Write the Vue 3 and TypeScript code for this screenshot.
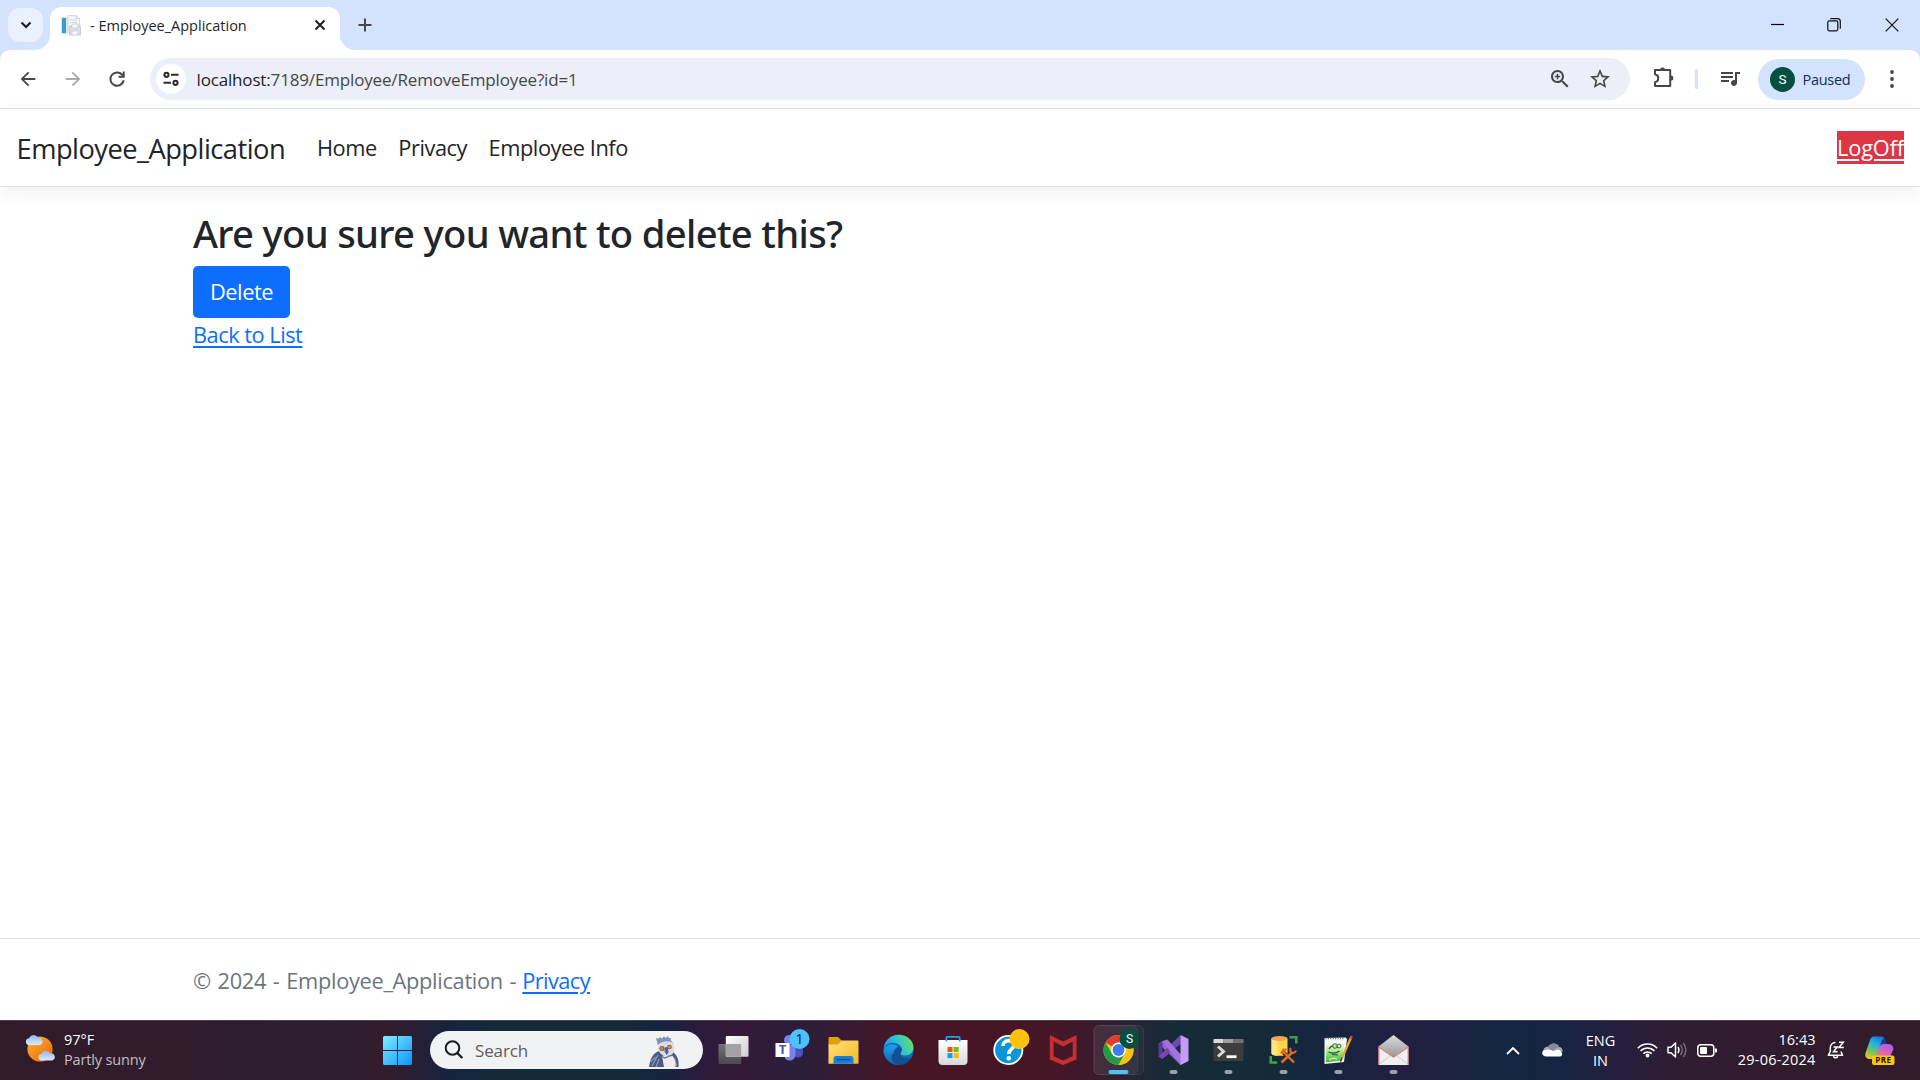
<script setup lang="ts">
interface NavLink {
  label: string
  cls: string
}

const navLinks: NavLink[] = [
  { label: 'Home', cls: 'home' },
  { label: 'Privacy', cls: 'privacy' },
  { label: 'Employee Info', cls: 'info' },
]
</script>

<template>
  <div class="screen">
    <header class="tabstrip">
      <button class="tab-search" aria-label="Search tabs">
        <svg width="12" height="8" viewBox="0 0 12 8"><path d="M1.5 1.5 6 6l4.5-4.5" fill="none" stroke="#1f1f1f" stroke-width="2.2" /></svg>
      </button>
      <div class="tab">
        <svg class="flare left" width="15" height="15" viewBox="0 0 15 15"><path d="M15 0v15H0A15 15 0 0 0 15 0z" fill="#fff" /></svg>
        <svg class="favicon" width="20" height="21" viewBox="0 0 20 21">
          <rect x="0" y="2" width="7" height="17" fill="#e3e6e8" />
          <rect x="1" y="3" width="4" height="15" fill="#3f9bcb" />
          <path d="M7 .5h8l3.500 3v14H7z" fill="#f3f4f6" stroke="#d3d5da" stroke-width=".8" />
          <path d="M15 .5v3h3.500" fill="none" stroke="#c7cad0" stroke-width=".8" />
          <path d="M9 5h7M9 7.500h7" stroke="#d4d8df" />
          <path d="M8.500 11h11v9h-11z" fill="#dcdfe5" stroke="#bcc0c7" stroke-width=".7" />
          <path d="M11 9h6v4h-6zM11 16h6v4h-6z" fill="#f6f7f9" stroke="#c4c8ce" stroke-width=".6" />
        </svg>
        <span class="tab-title">- Employee_Application</span>
        <svg class="tab-close" width="12" height="12" viewBox="0 0 12 12"><path d="M1.500 1.500l9 9M10.500 1.500l-9 9" stroke="#1f1f1f" stroke-width="2" /></svg>
        <svg class="flare right" width="15" height="15" viewBox="0 0 15 15"><path d="M0 0v15h15A15 15 0 0 1 0 0z" fill="#fff" /></svg>
      </div>
      <svg class="plus" width="14" height="14" viewBox="0 0 14 14"><path d="M7 .5v13M.5 7h13" stroke="#474747" stroke-width="2" /></svg>
      <div class="win-controls">
        <svg width="14" height="14" viewBox="0 0 14 14"><path d="M0 6.500h13" stroke="#000" stroke-width="1.200" /></svg>
        <svg width="14" height="14" viewBox="0 0 14 14"><rect x=".8" y="2.800" width="10" height="10" rx="1.500" fill="none" stroke="#111" stroke-width="1.200" /><path d="M3.300.700h7.200a2.800 2.800 0 0 1 2.800 2.800v7.200" fill="none" stroke="#111" stroke-width="1.200" /></svg>
        <svg width="14" height="14" viewBox="0 0 14 14"><path d="M.7.700l12.600 12.600M13.300.700.700 13.300" stroke="#111" stroke-width="1.200" /></svg>
      </div>
    </header>

    <div class="toolbar-wrap">
      <div class="toolbar">
        <svg class="back" width="22" height="22" viewBox="0 0 24 24"><path fill="#474747" d="M20 11H7.830l5.590-5.590L12 4l-8 8 8 8 1.410-1.410L7.830 13H20v-2z" /></svg>
        <svg class="forward" width="22" height="22" viewBox="0 0 24 24"><path fill="#a9a9a9" d="M12 4l-1.410 1.410L16.170 11H4v2h12.170l-5.580 5.590L12 20l8-8z" /></svg>
        <svg class="reload" width="18" height="18" viewBox="0 0 18 18"><path d="M15.700 10.300A6.700 6.700 0 1 1 14 4.500l1.700 1.700" fill="none" stroke="#474747" stroke-width="2" /><path d="M15.700 1.500v5.300h-5.200" fill="none" stroke="#474747" stroke-width="2" /></svg>
        <div class="omnibox">
          <span class="site-info">
            <svg width="16" height="16" viewBox="0 0 16 16"><g fill="none" stroke="#2b2b2b" stroke-width="2"><circle cx="3.500" cy="3.800" r="2.100" /><path d="M8 3.800h7.500M.5 11.800H8" /><circle cx="12.500" cy="11.800" r="2.100" /></g></svg>
          </span>
          <span class="url"><b>localhost:</b>7189/Employee/RemoveEmployee?id=1</span>
          <svg class="zoom" width="24" height="24" viewBox="0 0 24 24"><path fill="#474747" d="M15.500 14h-.79l-.28-.27C15.410 12.590 16 11.110 16 9.500 16 5.910 13.090 3 9.500 3S3 5.910 3 9.500 5.910 16 9.500 16c1.610 0 3.090-.59 4.230-1.570l.27.28v.79l5 4.990L20.490 19l-4.990-5zm-6 0C7.010 14 5 11.990 5 9.500S7.010 5 9.500 5 14 7.010 14 9.500 11.990 14 9.500 14z" /><path d="M9.500 6.800v5.400M6.800 9.500h5.400" stroke="#474747" stroke-width="1.600" /></svg>
          <svg class="star" width="24" height="24" viewBox="0 0 24 24"><path fill="#474747" d="M22 9.240l-7.190-.62L12 2 9.190 8.630 2 9.240l5.460 4.730L5.820 21 12 17.270 18.180 21l-1.630-7.030L22 9.240zM12 15.400l-3.760 2.270 1-4.280-3.320-2.880 4.380-.38L12 6.100l1.710 4.040 4.380.38-3.320 2.880 1 4.280L12 15.400z" /></svg>
        </div>
        <svg class="puzzle" width="22" height="22" viewBox="0 0 22 22">
          <path d="M3 3h14.200v15.900H2v-3.800c2.100-.5 3.300-2 3.300-3.900S4.100 7.800 2 7.300V3z" fill="none" stroke="#474747" stroke-width="2" stroke-linejoin="round" />
          <path d="M7 3a2.600 2.600 0 0 1 5.200 0zM17.800 8.500a2.600 2.600 0 0 1 0 5.200z" fill="#474747" />
        </svg>
        <span class="divider"></span>
        <svg class="media" width="24" height="24" viewBox="0 0 24 24"><path fill="#474747" d="M15 6H3v2h12V6zm0 4H3v2h12v-2zM3 16h8v-2H3v2zM17 6v8.180c-.31-.11-.65-.18-1-.18-1.660 0-3 1.340-3 3s1.340 3 3 3 3-1.340 3-3V8h3V6h-5z" /></svg>
        <div class="profile"><span class="avatar">S</span><span class="paused">Paused</span></div>
        <svg class="dots" width="4" height="18" viewBox="0 0 4 18"><g fill="#474747"><circle cx="2" cy="2" r="1.900" /><circle cx="2" cy="9" r="1.900" /><circle cx="2" cy="16" r="1.900" /></g></svg>
      </div>
    </div>

    <div class="page">
      <nav class="navbar">
        <a class="brand">Employee_Application</a>
        <a v-for="l in navLinks" :key="l.label" class="nav-link" :class="l.cls">{{ l.label }}</a>
        <a class="logoff">LogOff</a>
      </nav>
      <main class="main">
        <h3>Are you sure you want to delete this?</h3>
        <button class="btn">Delete</button>
        <div><a class="link back-link">Back to List</a></div>
      </main>
      <footer class="footer"><span class="copy">© 2024 - Employee_Application -</span><a class="link privacy">Privacy</a></footer>
    </div>

    <div class="taskbar">
      <div class="weather">
        <svg width="31" height="29" viewBox="0 0 31 29">
          <defs>
            <linearGradient id="sun" x1="0" y1="0" x2="1" y2="1"><stop offset="0" stop-color="#f6b52c" /><stop offset="1" stop-color="#ee6410" /></linearGradient>
            <linearGradient id="cloud" x1="0" y1="0" x2="0" y2="1"><stop offset="0" stop-color="#94b3ee" /><stop offset="1" stop-color="#dce9fb" /></linearGradient>
          </defs>
          <circle cx="15" cy="15" r="12.600" fill="url(#sun)" />
          <path d="M3.500 11A3.400 3.400 0 0 1 4 4.300 5 5 0 0 1 13 3.600a3.700 3.700 0 0 1 1.500 7.400z" fill="url(#cloud)" />
          <path d="M16 26.500a3.300 3.300 0 0 1 .3-6.500 5 5 0 0 1 9-.7 3.700 3.700 0 0 1 1.700 7.200z" fill="url(#cloud)" />
        </svg>
        <div class="weather-text"><span>97°F</span><span class="sub">Partly sunny</span></div>
      </div>

      <svg class="start" width="29" height="29" viewBox="0 0 29 29">
        <defs><linearGradient id="win" gradientUnits="userSpaceOnUse" x1="0" y1="0" x2="29" y2="29"><stop offset="0" stop-color="#7deeff" /><stop offset="1" stop-color="#0c95fb" /></linearGradient></defs>
        <path d="M1 0h13v14H0V1zM15 0h13l1 1v13H15zM0 15h14v14H1l-1-1zM15 15h14v13l-1 1H15z" fill="url(#win)" />
      </svg>

      <div class="search">
        <svg class="lens" width="20" height="20" viewBox="0 0 20 20"><circle cx="8.500" cy="8" r="6.800" fill="none" stroke="#1c1c1c" stroke-width="2" /><path d="M13.300 13l5 5" stroke="#1c1c1c" stroke-width="2.400" /></svg>
        <span class="search-label">Search</span>
        <svg class="eagle" width="30" height="32" viewBox="0 0 30 32">
          <path d="M0 31C1 23 4 17 10 15l14 1c5 4 6 9 5.500 15z" fill="#4b5a80" />
          <path d="M3 30l6-11M7 31l3-8M1.500 26l5-5M27.500 30l-2-8" stroke="#8b9bc0" stroke-width="1.200" />
          <path d="M13 20l10-1c3 4 4 8 3.500 12H15z" fill="#efe9ea" />
          <path d="M9 10 7 2l2.500.7L11 1l2 1.500L15 .3l1.500 1.700L19 0l1 2 2.500.3L21.500 4 24 7z" fill="#8290bb" />
          <path d="M9 9c3-4 12-5 15.500-1.500 1.500 5 1 9.500-3 12.500h-7c-4-3-6.500-6-5.500-11z" fill="#dcdbe6" />
          <path d="M12 20l4 2 4-2 4-1" stroke="#64668a" stroke-width="1.300" fill="none" />
          <circle cx="13" cy="12.500" r="2.500" fill="#7a5a55" /><circle cx="20.500" cy="11" r="2.300" fill="#7a5a55" />
          <circle cx="13" cy="12.500" r="1.400" fill="#ee8d25" /><circle cx="20.500" cy="11" r="1.400" fill="#ee8d25" />
          <path d="M15.500 11.500l3-.5 1.200 5-2 3-2-3z" fill="#45639c" />
        </svg>
      </div>

      <div class="apps">
        <svg viewBox="0 0 55 60">
          <defs>
            <linearGradient id="tv" x1="0" y1="0" x2="1" y2="1"><stop offset="0" stop-color="#fff" /><stop offset="1" stop-color="#d0cdd0" /></linearGradient>
            <linearGradient id="tv2" x1="0" y1="0" x2="0" y2="1"><stop offset="0" stop-color="#767377" /><stop offset="1" stop-color="#4b494c" /></linearGradient>
          </defs>
          <rect x="12.500" y="24" width="22.700" height="20" rx="1" fill="url(#tv2)" />
          <rect x="19.800" y="16" width="22.700" height="20.700" rx="1" fill="url(#tv)" />
          <path d="M19.800 24h15.400v12.700H19.800z" fill="#a3a1a4" />
        </svg>
        <svg viewBox="0 0 55 60">
          <circle cx="28" cy="20" r="5" fill="#7b83eb" />
          <path d="M33 27h9v5.500a5 5 0 0 1-9 3z" fill="#4a54c0" />
          <path d="M23 25h11.500v9.500a6 6 0 0 1-10.500 4z" fill="#7b83eb" />
          <rect x="14.500" y="23" width="14" height="14" fill="#fff" />
          <text x="21.500" y="34.300" class="t-tile">T</text>
          <circle cx="38.500" cy="19" r="10" fill="#4cc2ff" />
          <text x="38.500" y="24" class="t-badge">1</text>
        </svg>
        <svg viewBox="0 0 55 60">
          <defs><linearGradient id="fold" x1="0" y1="0" x2="1" y2="1"><stop offset="0" stop-color="#ffe07a" /><stop offset="1" stop-color="#f5ba26" /></linearGradient></defs>
          <path d="M12.500 18q0-1 1-1h8.500l3.500 3.500V26h-13z" fill="#dda00e" />
          <path d="M12.500 24.500H22l3.500-4h16q1 0 1 1v22.200h-30z" fill="url(#fold)" />
          <path d="M17.500 43.700v-5q0-2.700 2.700-2.700h14.600q2.700 0 2.700 2.700v5z" fill="#1581d8" />
          <path d="M20.700 39.600h13.600" stroke="#0a4f9c" stroke-width="1.500" />
        </svg>
        <svg viewBox="0 0 55 60">
          <defs>
            <linearGradient id="edA" x1="0" y1=".6" x2="1" y2=".3"><stop offset="0" stop-color="#2294dc" /><stop offset=".5" stop-color="#2fc1d6" /><stop offset="1" stop-color="#66e05c" /></linearGradient>
            <linearGradient id="edB" x1="0" y1="0" x2="0" y2="1"><stop offset="0" stop-color="#1fa2e4" /><stop offset="1" stop-color="#0c5fb4" /></linearGradient>
          </defs>
          <circle cx="27.500" cy="30" r="15" fill="#0f66bb" />
          <path d="M12.500 30A15 15 0 0 0 30 44.800c-9-2-11.500-13-3-18.300-4-3.500-12-2.500-14.500 3.500z" fill="url(#edB)" />
          <path d="M22.500 33c.5 6 8 9.500 16 6.500-3 4.500-7 5.500-11 5.500-7-2-9-9-5-12z" fill="#124f92" />
          <path d="M12.600 28C14 20 20 14.800 27.500 14.800c9 0 15 6.200 15 12.700 0 5-3.500 8-8 8-3.700 0-5.500-1.300-5-2.700 1-1 1.300-2 1.300-3 0-4-4-7-9-7-4 0-7.500 2-9.200 5.200z" fill="url(#edA)" />
          <path d="M29.500 33c1.500-1.500 1.600-4 .3-6-4.300.5-7 3.500-7 7 0 3.500 4 8 10.500 7.500 4-.3 7-2 8-4.200-5 2.200-13 .5-11.800-4.300z" fill="#124f92" />
        </svg>
        <svg viewBox="0 0 55 60">
          <defs><linearGradient id="bag" x1="0" y1="0" x2="0" y2="1"><stop offset="0" stop-color="#fff" /><stop offset="1" stop-color="#d9d9db" /></linearGradient></defs>
          <path d="M12.500 20h29v21q0 4-4 4h-21q-4 0-4-4z" fill="url(#bag)" />
          <path d="M20.300 21.500v-3.700q0-1 1-1h11.400q1 0 1 1v3.700" fill="none" stroke="#1fa3ea" stroke-width="1.700" />
          <path d="M21.500 27h5v5h-5z" fill="#f25022" /><path d="M27.600 27h5v5h-5z" fill="#7fba00" />
          <path d="M21.500 33.100h5v5h-5z" fill="#00a4ef" /><path d="M27.600 33.100h5v5h-5z" fill="#ffb900" />
        </svg>
        <svg viewBox="0 0 55 60">
          <circle cx="27.300" cy="30" r="14.100" fill="#0896d8" stroke="#fff" stroke-width="1.800" />
          <path d="M22 26c0-7 11-7 11-1 0 4-5.200 4-5.200 9" fill="none" stroke="#fff" stroke-width="3.600" />
          <circle cx="27.800" cy="38.300" r="2.300" fill="#fff" />
          <circle cx="38.500" cy="19" r="10" fill="#ffc20a" />
        </svg>
        <svg viewBox="0 0 55 60">
          <path d="M13.800 15l13.300 6.500L40.500 15v24.500L27.100 45l-13.300-5.500zM17.600 21.500v14.800l9.500 4.200 9.600-4.200V21.500l-9.600 5z" fill="#c4302f" fill-rule="evenodd" />
        </svg>
        <svg viewBox="0 0 55 60">
          <rect x="3" y="5.500" width="49.500" height="49" rx="5" fill="#fff" fill-opacity=".04" stroke="#fff" stroke-opacity=".08" />
          <rect x="3" y="5.500" width="43.500" height="49" rx="5" fill="#fff" fill-opacity=".04" stroke="#fff" stroke-opacity=".07" />
          <circle cx="27.500" cy="30" r="15" fill="#fbc116" />
          <path d="M27.500 30 14.510 22.500A15 15 0 0 1 40.490 22.500z" fill="#e33b2e" />
          <path d="M14.510 22.500A15 15 0 0 0 27.500 45l6.500-11.250-6.500-3.750-6.500 3.750z" fill="#229a48" />
          <path d="M27.500 22.500h13A15 15 0 0 1 27.500 45L34 33.750z" fill="#fbc116" />
          <circle cx="27.500" cy="30" r="7.500" fill="#fff" /><circle cx="27.500" cy="30" r="5.900" fill="#3b7ded" />
          <circle cx="38.500" cy="19" r="10" fill="#034f40" />
          <text x="38.500" y="23.300" class="t-s">S</text>
          <rect x="17.500" y="50" width="20" height="4" rx="2" fill="#4cc2ff" />
        </svg>
        <svg viewBox="0 0 55 60">
          <path d="M12.500 23.500l4-2.500L42.500 40 34.500 45z" fill="#9264cc" />
          <path d="M12.500 23.500l4-2.500v18l-4-2.500z" fill="#5c3b98" />
          <path d="M16.500 39l-4-2.500L34.500 15v9z" fill="#7148b0" />
          <path d="M16.500 21l5-1.500L36 36l-1.500 9z" fill="#a273dc" />
          <path d="M34.500 15l8 4v22l-8 4z" fill="#c79bfa" />
          <rect class="run" x="23.500" y="50" width="8" height="4" rx="2" />
        </svg>
        <svg viewBox="0 0 55 60">
          <rect x="12.500" y="19" width="30" height="22" rx="1" fill="#3d3d3f" />
          <path d="M12.500 23v-3q0-1 1-1h9v4z" fill="#dadada" /><path d="M22.500 19h10v4h-10z" fill="#a0a0a0" /><path d="M32.500 19h9q1 0 1 1v3h-10z" fill="#717173" />
          <path d="M17 26.500l5.500 5-5.500 5" fill="none" stroke="#d9d9d9" stroke-width="3" /><path d="M25.500 36.700h10" stroke="#fff" stroke-width="2.800" />
          <rect class="run" x="23.500" y="50" width="8" height="4" rx="2" />
        </svg>
        <svg viewBox="0 0 55 60">
          <path d="M15.500 18.500v14.700c0 3.500 16 3.500 16 0V18.500z" fill="#fdd748" /><path d="M15.500 18.500v14.700c0 1.500 3 2.500 6 2.600V20z" fill="#ffe680" />
          <ellipse cx="23.500" cy="18.500" rx="8" ry="2.500" fill="#f2a54c" />
          <path d="M33.500 17.200h6.800v6.300M14.700 36v6.500h6.500" fill="none" stroke="#3fa046" stroke-width="2.600" />
          <g stroke="#1b2a3a" stroke-width="4" fill="none"><path d="M26 31l12 11.500M25.500 42.500l11-10" /></g>
          <path d="M26.500 31l11.500 11.500" stroke="#e8681c" stroke-width="2.400" /><path d="M24 33l3-4.500 4.500.3-4.500 5.200z" fill="#e8681c" />
          <path d="M25.500 42.500l10-9.500" stroke="#e8681c" stroke-width="2.600" /><path d="M40 30.500c-1 3-5 3.500-5.800-.2-.2-1 .3-1.800.8-2.300" fill="none" stroke="#e8681c" stroke-width="2" />
          <rect class="run" x="23.500" y="50" width="8" height="4" rx="2" />
        </svg>
        <svg viewBox="0 0 55 60">
          <defs><linearGradient id="np" x1="0" y1="0" x2="0" y2="1"><stop offset="0" stop-color="#fff" /><stop offset=".35" stop-color="#c9eeb0" /><stop offset="1" stop-color="#3fb928" /></linearGradient></defs>
          <path d="M13.500 18l21-.5 1.500 1.500-3 23-19.500 2z" fill="#f2f3f3" />
          <path d="M15 21.500h18.500l-2.500 19-16 1.700z" fill="url(#np)" />
          <path d="M14.500 18.500h19" stroke="#666" stroke-width="1.600" stroke-dasharray="1 1.400" />
          <path d="M18 29c2-4 7-4 9-1M17.500 32c4 2 8 1 11-1M21 34.500l6 .5" stroke="#1e5f20" stroke-width="1.200" fill="none" />
          <circle cx="24" cy="26" r="2.300" fill="#b9e68f" stroke="#274f1f" stroke-width=".8" /><circle cx="28" cy="26" r="1.900" fill="#d5f0b7" stroke="#274f1f" stroke-width=".8" />
          <path d="M18 40c3-2 5-2 8-1" fill="none" stroke="#e4f8d8" stroke-width="1.300" />
          <path d="M39.800 18 31 38" stroke="#eda61d" stroke-width="2.400" /><path d="M40.700 16l-1.200 2.800" stroke="#d64b35" stroke-width="2.400" /><path d="M31.200 37.500l-1.700 4" stroke="#3b3124" stroke-width="1.300" />
          <rect class="run" x="23.500" y="50" width="8" height="4" rx="2" />
        </svg>
        <svg viewBox="0 0 55 60">
          <defs><linearGradient id="env" x1="0" y1="0" x2="0" y2="1"><stop offset="0" stop-color="#dcdcdc" /><stop offset="1" stop-color="#969696" /></linearGradient></defs>
          <path d="M12.500 26.500 27.500 15l15 11.500-15 11z" fill="url(#env)" />
          <path d="M12.500 26.500V45h30V26.500L27.500 37z" fill="#efeff1" />
          <path d="M13 44.500l12-9.500M42 44.500 30 35" stroke="#d9b9bb" stroke-width=".8" />
          <path d="M12.900 44.500V27.300l14.600 10 14.600-10v17.200" fill="none" stroke="#e0656b" stroke-width=".9" />
          <rect class="run" x="23.500" y="50" width="8" height="4" rx="2" />
        </svg>
      </div>

      <div class="tray">
        <svg class="chev" width="14" height="9" viewBox="0 0 14 9"><path d="M1 8l6-6 6 6" fill="none" stroke="#fff" stroke-width="1.800" /></svg>
        <svg class="onedrive" width="21" height="14" viewBox="0 0 21 14">
          <path d="M1 10C1 5 4 3 6 4c2-4 9-5 11 0 3 0 4 3 3.500 5z" fill="#a9aab8" /><path d="M6 4c2-4 9-5 11 0L9 8z" fill="#85879b" />
          <path d="M4.500 13.500C-1.500 13.500-1 6.500 4 7c3-1 5 0 8 1.500 2-2.500 6-2.500 7 .5 2 1 1.500 4.500-1 4.500z" fill="#fff" />
        </svg>
        <div class="lang"><span>ENG</span><span>IN</span></div>
        <svg class="wifi" width="21" height="16" viewBox="0 0 21 16"><g fill="none" stroke="#fff" stroke-width="1.500"><path d="M.8 6.200a13.500 13.500 0 0 1 19.400 0" /><path d="M3.600 8.900a9.700 9.700 0 0 1 13.800 0" /><path d="M6.300 11.600a6 6 0 0 1 8.400 0" /></g><circle cx="10.500" cy="13.500" r="1.900" fill="#fff" /></svg>
        <svg class="volume" width="20" height="18" viewBox="0 0 20 18"><path d="M1 6.300h3L8.500 2v14L4 11.700H1z" fill="none" stroke="#fff" stroke-width="1.500" stroke-linejoin="round" /><path d="M11 6q2 3 0 6" fill="none" stroke="#fff" stroke-width="1.400" /><path d="M13.500 3.800q3.600 5.200 0 10.400M16.300 2q5 7 0 14" fill="none" stroke="#776b7d" stroke-width="1.400" /></svg>
        <svg class="battery" width="20" height="13" viewBox="0 0 20 13"><rect x=".8" y=".8" width="16" height="11.400" rx="3" fill="none" stroke="#fff" stroke-width="1.500" /><rect x="3" y="3" width="7" height="7" rx="1" fill="#fff" /><path d="M17.800 4.500h1.200q1 0 1 1v2q0 1-1 1h-1.200z" fill="#fff" /></svg>
        <div class="clock"><span class="time">16:43</span><span class="date">29-06-2024</span></div>
        <svg class="bell" width="18" height="18" viewBox="0 0 18 18"><path d="M8.500 1.500C5.200 1.500 3.300 4 3.300 7v3.500L1.300 14.300h14.200L14 10.500" fill="none" stroke="#fff" stroke-width="1.500" stroke-linejoin="round" /><path d="M6.300 15.200q2.300 3.200 4.600 0" fill="none" stroke="#fff" stroke-width="1.500" /><path d="M6.500 6h3.700l-3.700 4.800h4.200M12 1.200h4.300L12 6.500h4.800" fill="none" stroke="#fff" stroke-width="1.500" /></svg>
        <svg class="copilot" width="30" height="30" viewBox="0 0 30 30">
          <defs>
            <linearGradient id="cpA" x1=".7" y1="0" x2=".2" y2="1"><stop offset="0" stop-color="#1b6fe0" /><stop offset=".35" stop-color="#22b3e6" /><stop offset=".7" stop-color="#7cc257" /><stop offset="1" stop-color="#f2c327" /></linearGradient>
            <linearGradient id="cpB" x1=".8" y1="0" x2=".3" y2="1"><stop offset="0" stop-color="#a95df0" /><stop offset=".5" stop-color="#dd63b8" /><stop offset="1" stop-color="#f98a5c" /></linearGradient>
          </defs>
          <path d="M12 8h11q5 0 5.500 5l-4 9q-1.500 3-4.500 3H9z" fill="url(#cpB)" />
          <path d="M9 .5h7q3 0 4 3l1.500 4.500h-4q-2 0-3 3l-3.500 10q-1 2-3 2H3.500Q-.5 22 .5 17L5 4Q6.200.500 9 .500z" fill="url(#cpA)" />
          <path d="M19.500 2l2 6h-4q-2 0-3 3l-1.500 4L17 4z" fill="#153a96" />
          <rect x="7" y="19.500" width="22.500" height="9.500" rx="2" fill="#ffc60a" />
          <text x="18.300" y="27" class="t-pre">PRE</text>
        </svg>
      </div>
    </div>
  </div>
</template>

<style>
html, body { margin: 0; overflow: hidden; }
</style>

<style scoped>
.screen { width: 1920px; height: 1080px; display: flex; flex-direction: column; overflow: hidden; background: #fff; font-family: "Open Sans", "Noto Sans", sans-serif; }
svg { display: block; flex: none; }
button { border: 0; padding: 0; font-family: inherit; }
span, a { white-space: nowrap; }

.tabstrip { height: 50px; flex: none; display: flex; background: #d3e2fd; }
.tab-search { width: 35px; height: 34px; margin: 8px 0 0 8px; border-radius: 12px; background: #e9f1fe; display: flex; align-items: center; justify-content: center; }
.tab { position: relative; width: 290px; height: 43px; margin: 7px 0 0 7px; border-radius: 12px 12px 0 0; background: #fff; display: flex; }
.flare { position: absolute; bottom: 0; }
.flare.left { left: -15px; }
.flare.right { right: -15px; }
.favicon { margin: 8px 0 0 11px; }
.tab-title { margin-left: 9px; font-size: 14.5px; line-height: 37px; color: #1f1f1f; }
.tab-close { margin: 12px 14px 0 auto; }
.plus { margin: 18px 0 0 18px; }
.win-controls { margin: 18px 21.5px 0 auto; display: flex; }
.win-controls svg + svg { margin-left: 42px; }
.win-controls svg:last-child { margin-left: 44px; }

.toolbar-wrap { flex: none; height: 58px; background: #d3e2fd; border-bottom: 1px solid #dfdfdf; }
.toolbar { height: 58px; background: #fff; border-radius: 10px 10px 0 0; display: flex; align-items: center; }
.back { margin-left: 16.5px; }
.forward { margin-left: 23px; }
.reload { margin-left: 24.5px; }
.omnibox { width: 1480px; height: 42px; margin-left: 24px; border-radius: 21px; background: #eceef8; display: flex; align-items: center; }
.site-info { width: 30px; height: 30px; margin-left: 6px; border-radius: 50%; background: #fff; display: flex; align-items: center; justify-content: center; }
.url { margin-left: 10.5px; padding-top: 1px; font-size: 17px; line-height: 40px; letter-spacing: -0.16px; color: #474747; }
.url b { font-weight: 400; color: #1f1f1f; }
.zoom { margin-left: auto; margin-right: 16px; }
.star { margin-right: 18px; }
.puzzle { margin-left: 23px; margin-top: -2px; }
.divider { width: 3px; height: 20px; margin-left: 20px; border-radius: 2px; background: #d3e2fd; }
.media { margin-left: 20px; margin-top: -3px; }
.profile { width: 107px; height: 41px; margin-left: 16px; border-radius: 21px; background: #d3e2fd; display: flex; align-items: center; }
.avatar { width: 25px; height: 25px; margin-left: 12px; border-radius: 50%; background: #034f40; color: #fff; font: 13.5px/25px Roboto, sans-serif; text-align: center; }
.paused { margin-left: 7.5px; font-size: 14.5px; letter-spacing: -0.27px; color: #0f2d62; }
.dots { margin-left: 25px; }

.page { flex: 1; min-height: 0; display: flex; flex-direction: column; color: #212529; font-size: 21.8px; line-height: 33.75px; }
.navbar { height: 77px; flex: none; display: flex; align-items: center; border-bottom: 1px solid #dfdfdf; box-shadow: 0 6px 18px rgba(0, 0, 0, 0.06); }
.brand { width: 266.5px; margin-left: 16.5px; padding-top: 2px; font-size: 27.3px; letter-spacing: -0.53px; }
.nav-link { letter-spacing: -0.45px; padding-top: 1px; }
.nav-link.home { margin-left: 34px; }
.nav-link.privacy { margin-left: 21.5px; }
.nav-link.info { margin-left: 21.5px; }
.logoff { margin: 0 16px 0 auto; line-height: 33px; background: #dc3545; color: #fff; letter-spacing: -0.16px; text-decoration: underline; text-decoration-thickness: 2px; text-underline-offset: 3px; }
.main { flex: 1; padding: 23px 0 0 193px; }
h3 { margin: 0 0 9px; font-family: "Noto Sans", sans-serif; font-size: 38.2px; line-height: 47px; font-weight: 500; letter-spacing: -0.68px; }
.btn { display: block; width: 97px; height: 52px; border-radius: 5px; background: #0d6efd; color: #fff; font-size: 21.8px; line-height: 50px; letter-spacing: -0.47px; }
.link { color: #0d6efd; text-decoration: underline; text-decoration-thickness: 2px; text-underline-offset: 3px; }
.back-link { letter-spacing: -0.5px; }
.footer { height: 81px; flex: none; display: flex; align-items: center; padding: 2px 0 0 193px; box-sizing: content-box; height: 79px; border-top: 1px solid #dee2e6; color: #6c757d; }
.copy { letter-spacing: -0.32px; word-spacing: 1.4px; }
.footer .privacy { margin-left: 6px; letter-spacing: -0.6px; }

.taskbar { height: 60px; flex: none; box-sizing: border-box; display: flex; align-items: center; color: #fff; font-size: 14.5px;
  background: linear-gradient(#4b4050, #4b4050) 0 0 / 100% 1px no-repeat,
    linear-gradient(90deg, #2f1b29 0, #301c2c 200px, #2b1f30 270px, #2c1f31 340px, #341c2b 380px, #2b1e35 410px, #15243f 450px, #142b37 500px, #142b37 620px, #15243f 660px, #2c1b3b 705px, #351a38 740px, #2a1e3b 800px, #3a1a30 850px, #471626 900px, #471626 1050px, #3c1a2c 1090px, #262535 1130px, #152b38 1180px, #152b38 1260px, #14253f 1320px, #211f3f 1400px, #1d213f 1440px, #14263f 1490px, #152442 1560px, #241f3e 1610px, #311d30 1690px, #311b2b 100%); }
.weather { width: 150px; margin-left: 24.5px; display: flex; align-items: center; }
.weather > svg { margin-top: -4px; }
.weather-text, .lang, .clock { display: flex; flex-direction: column; line-height: 20px; }
.weather-text { margin-left: 8.5px; }
.weather-text .sub { color: #c7bfc5; letter-spacing: -0.14px; }
.start { margin-left: 208.5px; }
.search { width: 273px; height: 38px; margin-left: 18px; border-radius: 19px; background: #f1f2f4; display: flex; align-items: center; overflow: hidden; }
.lens { margin-left: 14px; margin-top: -1px; }
.search-label { margin-left: 11px; font-size: 17px; letter-spacing: -0.14px; color: #5d5d5d; }
.eagle { margin-left: auto; margin-right: 24px; margin-top: 3px; }
.apps { margin-left: 3px; display: flex; }
.apps svg { width: 55px; height: 60px; }
.run { fill: #9a9fa9; }
.t-tile { font: 700 13px "Open Sans", sans-serif; fill: #4b53bc; text-anchor: middle; }
.t-badge { font: 14px "Open Sans", sans-serif; fill: #111; text-anchor: middle; }
.t-s { font: 12px Roboto, sans-serif; fill: #fff; text-anchor: middle; }
.t-pre { font: 700 8px "Open Sans", sans-serif; fill: #1d1600; text-anchor: middle; letter-spacing: 0.5px; }
.tray { flex: 1; display: flex; align-items: center; }
.chev { margin-left: 85px; }
.onedrive { margin-left: 22px; }
.lang { width: 30px; margin-left: 22.5px; text-align: center; padding-top: 1px; }
.wifi { margin-left: 21px; }
.volume { margin-left: 9px; }
.battery { margin-left: 10px; }
.clock { width: 77px; margin-left: 22px; text-align: right; align-items: flex-end; }
.clock .date { letter-spacing: 0.2px; }
.bell { margin-left: 11px; }
.copilot { margin-left: 20.5px; margin-top: 1px; }
</style>
